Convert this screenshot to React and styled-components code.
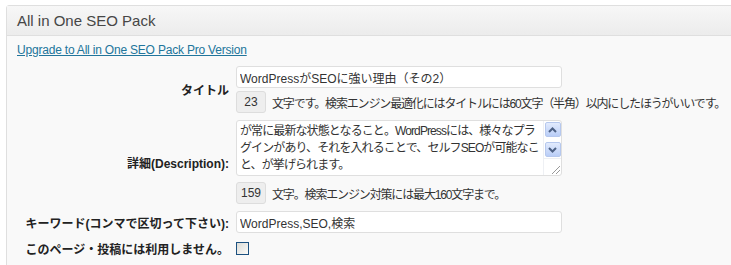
import React from 'react';
import styled, { createGlobalStyle } from 'styled-components';

const GlobalStyle = createGlobalStyle`
  html, body {
    margin: 0;
    padding: 0;
    background: #fff;
    overflow: hidden;
  }
  body {
    font-family: "Liberation Sans", "Noto Sans CJK JP", sans-serif;
    font-size: 12px;
    color: #333;
  }
`;

const Page = styled.div`
  padding: 5px 0 0 6px;
`;

const Panel = styled.div`
  width: 780px;
  border: 1px solid #dfdfdf;
  border-radius: 3px 0 0 0;
  background: #f9f9f9;
`;

const PanelHead = styled.h3`
  margin: 0;
  height: 29px;
  padding: 0 10px;
  display: flex;
  align-items: center;
  font-size: 15px;
  font-weight: normal;
  color: #464646;
  background: linear-gradient(to bottom, #f7f7f7, #ececec);
  border-bottom: 1px solid #dfdfdf;
`;

const PanelBody = styled.div`
  padding: 7px 10px 14px 10px;
`;

const UpgradeLink = styled.a`
  color: #21759b;
  font-size: 12px;
  letter-spacing: -0.2px;
  text-decoration: underline;
  display: inline-block;
  margin-bottom: 9px;
`;

const Form = styled.div`
  display: grid;
  grid-template-columns: 212px 1fr;
  column-gap: 7px;
  row-gap: 7px;
  align-items: center;
`;

const Label = styled.label`
  text-align: right;
  white-space: nowrap;
  font-weight: bold;
  font-size: 12px;
  color: #222;
`;

const Field = styled.div`
  display: flex;
  flex-direction: column;
  align-items: flex-start;
  gap: ${p => p.gap || 3}px;
`;

const TextInput = styled.input`
  box-sizing: border-box;
  width: 326px;
  height: 22px;
  margin: 0;
  padding: 0 3px;
  border: 1px solid #dfdfdf;
  border-radius: 3px;
  background: #fff;
  font-family: inherit;
  font-size: 12px;
  color: #333;
  outline: none;
`;

const CountRow = styled.div`
  display: flex;
  align-items: center;
  gap: 6px;
  white-space: nowrap;
`;

const CountBox = styled.span`
  box-sizing: border-box;
  width: 30px;
  height: 22px;
  display: flex;
  align-items: center;
  justify-content: center;
  background: #eee;
  border: 1px solid #ddd;
  border-radius: 3px;
  color: #333;
`;

const CountText = styled.span`
  font-size: 12px;
  letter-spacing: -1.15px;
`;

const AreaBox = styled.div`
  box-sizing: border-box;
  width: 326px;
  height: 56px;
  display: flex;
  border: 1px solid #dfdfdf;
  border-radius: 3px;
  background: #fff;
  overflow: hidden;
`;

const AreaText = styled.textarea`
  flex: 1;
  margin: 0;
  padding: 2px 3px;
  border: 0;
  resize: none;
  overflow: hidden;
  white-space: pre;
  font-family: inherit;
  font-size: 12px;
  line-height: 17px;
  letter-spacing: -0.9px;
  color: #333;
  background: transparent;
  outline: none;
`;

const ScrollCol = styled.div`
  width: 17px;
  display: flex;
  flex-direction: column;
  align-items: center;
  padding-top: 1px;
  border-left: 1px solid #eef0f4;
`;

const ScrollBtn = styled.div`
  box-sizing: border-box;
  width: 16px;
  height: 15px;
  margin-bottom: ${p => p.mb || 0}px;
  border: 1px solid #b6c8ee;
  border-radius: 2px;
  background: linear-gradient(to bottom, #e2ebfd, #b9cdf7);
  display: flex;
  align-items: center;
  justify-content: center;
`;

const Grip = styled.div`
  margin-top: auto;
  width: 17px;
  height: 16px;
  border-top: 1px solid #eef0f4;
  display: flex;
  align-items: flex-end;
  justify-content: flex-end;
`;

const CheckBox = styled.input`
  appearance: none;
  margin: 0;
  width: 13px;
  height: 13px;
  border: 1px solid #1c5180;
  background: linear-gradient(135deg, #dcdcd7, #fbfbf9);
`;

const Arrow = ({ up }) => (
  <svg width="9" height="6" viewBox="0 0 9 6">
    <path
      d={up ? 'M1 5 L4.5 1.5 L8 5' : 'M1 1 L4.5 4.5 L8 1'}
      fill="none"
      stroke="#4d6185"
      strokeWidth="2"
    />
  </svg>
);

const desc = 'が常に最新な状態となること。WordPressには、様々なプラ\nグインがあり、それを入れることで、セルフSEOが可能なこ\nと、が挙げられます。';

export default function App() {
  return (
    <>
      <GlobalStyle />
      <Page>
        <Panel>
          <PanelHead>All in One SEO Pack</PanelHead>
          <PanelBody>
            <UpgradeLink href="#">Upgrade to All in One SEO Pack Pro Version</UpgradeLink>
            <Form>
              <Label>タイトル</Label>
              <Field>
                <TextInput defaultValue="WordPressがSEOに強い理由（その2）" />
                <CountRow>
                  <CountBox>23</CountBox>
                  <CountText>文字です。検索エンジン最適化にはタイトルには60文字（半角）以内にしたほうがいいです。</CountText>
                </CountRow>
              </Field>

              <Label>詳細(Description):</Label>
              <Field gap={6}>
                <AreaBox>
                  <AreaText readOnly value={desc} />
                  <ScrollCol>
                    <ScrollBtn mb={5}><Arrow up /></ScrollBtn>
                    <ScrollBtn><Arrow /></ScrollBtn>
                    <Grip>
                      <svg width="12" height="12" viewBox="0 0 12 12">
                        <path d="M3 11 L11 3 M7 11 L11 7" stroke="#999" strokeWidth="1" />
                      </svg>
                    </Grip>
                  </ScrollCol>
                </AreaBox>
                <CountRow>
                  <CountBox>159</CountBox>
                  <CountText>文字。検索エンジン対策には最大160文字まで。</CountText>
                </CountRow>
              </Field>

              <Label>キーワード(コンマで区切って下さい):</Label>
              <Field>
                <TextInput defaultValue="WordPress,SEO,検索" />
              </Field>

              <Label>このページ・投稿には利用しません。</Label>
              <Field>
                <CheckBox type="checkbox" />
              </Field>
            </Form>
          </PanelBody>
        </Panel>
      </Page>
    </>
  );
}
